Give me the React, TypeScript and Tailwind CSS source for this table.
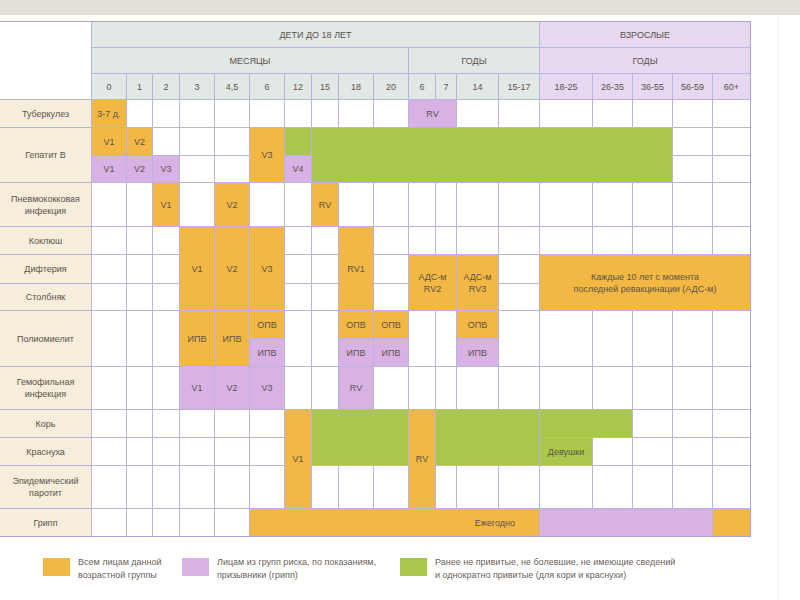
const COL = ["", "col-start-1", "col-start-2", "col-start-3", "col-start-4", "col-start-5", "col-start-6", "col-start-7", "col-start-8", "col-start-9", "col-start-10", "col-start-11", "col-start-12", "col-start-13", "col-start-14", "col-start-15", "col-start-16", "col-start-17", "col-start-18", "col-start-19", "col-start-20"];
const CSPAN = ["", "col-span-1", "col-span-2", "col-span-3", "col-span-4", "col-span-5", "col-span-6", "col-span-7", "col-span-8", "col-span-9", "col-span-10", "col-span-11", "col-span-12", "col-span-13", "col-span-14", "col-span-15", "col-span-16", "col-span-17", "col-span-18", "col-span-19"];
const ROW = ["", "row-start-1", "row-start-2", "row-start-3", "row-start-4", "row-start-5", "row-start-6", "row-start-7", "row-start-8", "row-start-9", "row-start-10", "row-start-11", "row-start-12", "row-start-13", "row-start-14", "row-start-15", "row-start-16", "row-start-17"];
const RSPAN = ["", "row-span-1", "row-span-2", "row-span-3"];

const O = "bg-[#f2b843]";
const P = "bg-[#d8b2e5]";
const G = "bg-[#a8c74b]";
const W = "bg-white";
const H = "bg-[#e2e8e5]";
const A = "bg-[#e5d8f0]";
const L = "bg-[#f6eedb]";

type Cell = { r: number; c: number; rs?: number; cs?: number; bg: string; text?: string; cls?: string };

// c = grid column (1 = label column, data column d sits at d + 2)
const HEAD = ["0", "1", "2", "3", "4,5", "6", "12", "15", "18", "20", "6", "7", "14", "15-17", "18-25", "26-35", "36-55", "56-59", "60+"];

const cells: Cell[] = [
  { r: 1, c: 1, rs: 3, bg: W },
  { r: 1, c: 2, cs: 14, bg: H, text: "ДЕТИ ДО 18 ЛЕТ" },
  { r: 1, c: 16, cs: 5, bg: A, text: "ВЗРОСЛЫЕ" },
  { r: 2, c: 2, cs: 10, bg: H, text: "МЕСЯЦЫ" },
  { r: 2, c: 12, cs: 4, bg: H, text: "ГОДЫ" },
  { r: 2, c: 16, cs: 5, bg: A, text: "ГОДЫ" },
  ...HEAD.map((t, i) => ({ r: 3, c: i + 2, bg: i < 14 ? H : A, text: t })),

  { r: 4, c: 1, bg: L, text: "Туберкулез" },
  { r: 5, c: 1, rs: 2, bg: L, text: "Гепатит В" },
  { r: 7, c: 1, bg: L, text: "Пневмококковая\nинфекция" },
  { r: 8, c: 1, bg: L, text: "Коклюш" },
  { r: 9, c: 1, bg: L, text: "Дифтерия" },
  { r: 10, c: 1, bg: L, text: "Столбняк" },
  { r: 11, c: 1, rs: 2, bg: L, text: "Полиомиелит" },
  { r: 13, c: 1, bg: L, text: "Гемофильная\nинфекция" },
  { r: 14, c: 1, bg: L, text: "Корь" },
  { r: 15, c: 1, bg: L, text: "Краснуха" },
  { r: 16, c: 1, bg: L, text: "Эпидемический\nпаротит" },
  { r: 17, c: 1, bg: L, text: "Грипп" },

  { r: 4, c: 2, bg: O, text: "3-7 д." },
  { r: 4, c: 12, cs: 2, bg: P, text: "RV" },

  { r: 5, c: 2, bg: O, text: "V1" },
  { r: 5, c: 3, bg: O, text: "V2" },
  { r: 5, c: 7, rs: 2, bg: O, text: "V3" },
  { r: 5, c: 8, bg: G },
  { r: 5, c: 9, rs: 2, cs: 10, bg: G },
  { r: 6, c: 2, bg: P, text: "V1" },
  { r: 6, c: 3, bg: P, text: "V2" },
  { r: 6, c: 4, bg: P, text: "V3" },
  { r: 6, c: 8, bg: P, text: "V4" },

  { r: 7, c: 4, bg: O, text: "V1" },
  { r: 7, c: 6, bg: O, text: "V2" },
  { r: 7, c: 9, bg: O, text: "RV" },

  { r: 8, c: 5, rs: 3, bg: O, text: "V1" },
  { r: 8, c: 6, rs: 3, bg: O, text: "V2" },
  { r: 8, c: 7, rs: 3, bg: O, text: "V3" },
  { r: 8, c: 10, rs: 3, bg: O, text: "RV1" },
  { r: 9, c: 12, rs: 2, cs: 2, bg: O, text: "АДС-м\nRV2" },
  { r: 9, c: 14, rs: 2, bg: O, text: "АДС-м\nRV3" },
  { r: 9, c: 16, rs: 2, cs: 5, bg: O, text: "Каждые 10 лет с момента\nпоследней ревакцинации (АДС-м)" },

  { r: 11, c: 5, rs: 2, bg: O, text: "ИПВ" },
  { r: 11, c: 6, rs: 2, bg: O, text: "ИПВ" },
  { r: 11, c: 7, bg: O, text: "ОПВ" },
  { r: 12, c: 7, bg: P, text: "ИПВ" },
  { r: 11, c: 10, bg: O, text: "ОПВ" },
  { r: 12, c: 10, bg: P, text: "ИПВ" },
  { r: 11, c: 11, bg: O, text: "ОПВ" },
  { r: 12, c: 11, bg: P, text: "ИПВ" },
  { r: 11, c: 14, bg: O, text: "ОПВ" },
  { r: 12, c: 14, bg: P, text: "ИПВ" },
  ...[2, 3, 4, 8, 9, 12, 13, 15, 16, 17, 18, 19, 20].map((c) => ({ r: 11, c, rs: 2, bg: W })),

  { r: 13, c: 5, bg: P, text: "V1" },
  { r: 13, c: 6, bg: P, text: "V2" },
  { r: 13, c: 7, bg: P, text: "V3" },
  { r: 13, c: 10, bg: P, text: "RV" },

  { r: 14, c: 8, rs: 3, bg: O, text: "V1" },
  { r: 14, c: 12, rs: 3, bg: O, text: "RV" },
  { r: 14, c: 9, rs: 2, cs: 3, bg: G },
  { r: 14, c: 13, rs: 2, cs: 3, bg: G },
  { r: 14, c: 16, cs: 2, bg: G },
  { r: 15, c: 16, bg: G, text: "Девушки" },

  { r: 17, c: 7, cs: 9, bg: O, text: "Ежегодно", cls: "justify-end pr-[24px]" },
  { r: 17, c: 16, cs: 4, bg: P },
  { r: 17, c: 20, bg: O },
];

const used = cells.reduce((s, x) => s + (x.rs ?? 1) * (x.cs ?? 1), 0);
const freeCount = 17 * 20 - used;

function Legend({ color, text, w }: { color: string; text: string; w: string }) {
  return (
    <div className={`flex items-start gap-[8px] ${w}`}>
      <div className={`w-[27px] h-[18px] mt-[2px] shrink-0 ${color}`} />
      <p className="text-[9px] leading-[13px] text-[#6a625b] whitespace-pre-line">{text}</p>
    </div>
  );
}

export default function App() {
  return (
    <div className="w-[800px] h-[600px] bg-white relative overflow-hidden [font-family:'Liberation_Sans',Arial,sans-serif] text-[#5b534c]">
      <div className="h-[15px] bg-[#e4e0d8]" />
      <div className="absolute left-[778px] top-[15px] bottom-0 w-px bg-[#f1efeb]" />

      <div className="mt-[6px] w-[751px] grid grid-cols-[91px_34px_25px_26px_34px_34px_34px_26px_26px_34px_34px_26px_20px_41px_40px_52px_39px_39px_39px_37px] grid-rows-[25px_25px_25px_27px_27px_26px_43px_27px_28px_26px_27px_27px_42px_27px_27px_42px_27px] gap-px bg-[#b7b4df] border-t border-r border-b border-[#a7a3d6]">
        {cells.map((x, i) => (
          <div
            key={i}
            className={`${COL[x.c]} ${CSPAN[x.cs ?? 1]} ${ROW[x.r]} ${RSPAN[x.rs ?? 1]} ${x.bg} flex items-center ${x.cls ?? "justify-center"} text-center text-[9px] leading-[12px] whitespace-pre-line`}
          >
            {x.text}
          </div>
        ))}
        {Array.from({ length: freeCount }).map((_, i) => (
          <div key={"w" + i} className="bg-white" />
        ))}
      </div>

      <div className="mt-[19px] flex pl-[43px]">
        <Legend color={O} w="w-[139px]" text={"Всем лицам данной\nвозрастной группы"} />
        <Legend color={P} w="w-[218px]" text={"Лицам из групп риска, по показаниям,\nпризывники (грипп)"} />
        <Legend color={G} w="w-[320px]" text={"Ранее не привитые, не болевшие, не имеющие сведений\nи однократно привитые (для кори и краснухи)"} />
      </div>
    </div>
  );
}
